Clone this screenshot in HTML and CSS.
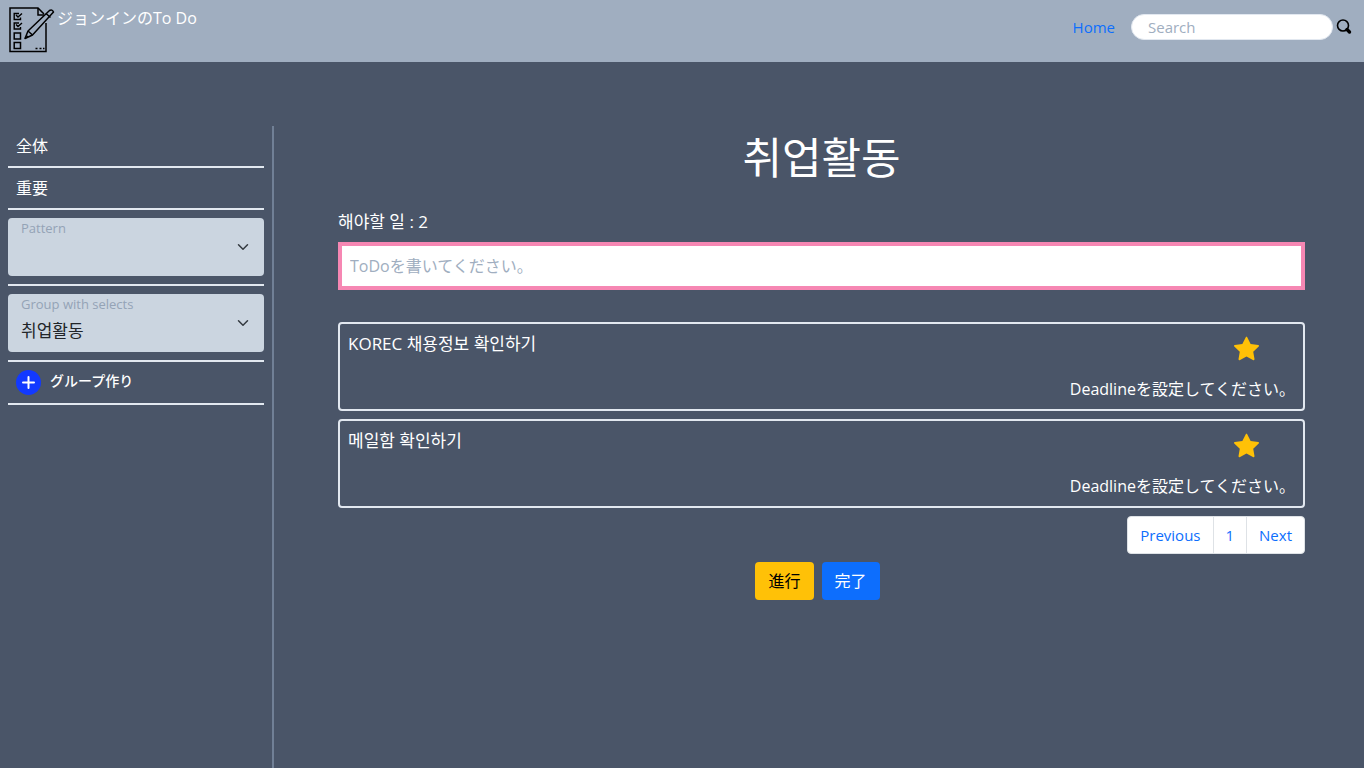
FILE: index.html
```html
<!DOCTYPE html>
<html lang="ja">
<head>
<meta charset="utf-8">
<meta name="viewport" content="width=device-width, initial-scale=1">
<title>ジョンインのTo Do</title>
<link rel="stylesheet" href="styles.css">
</head>
<body>
<header class="topbar">
  <div class="brand">
    <svg class="brand-logo" viewBox="0 0 48 48" fill="none" stroke="#000" stroke-width="1.5" aria-hidden="true">
      <path d="M38 17V45.500H2V2H30L36 8"/>
      <path d="M30 2V9H36"/>
      <path d="M17 32.500L20 25L41.500 4.500Q44 3 45.500 6L24.500 29Z" stroke-linejoin="round"/>
      <path d="M20 25L24.500 29M38 7.500L42.500 11.500M17 32.500L20 30" />
      <path d="M11 7.500H6.200V13.500H12.500V11.500M8 9L10 11L14 7.500" stroke-width="1.400"/>
      <path d="M11 17H6.200V23H12.500V21M8 18.500L10 20.500L14 17" stroke-width="1.400"/>
      <path d="M6.200 27H12.500V33H6.200ZM6.200 36.500H12.500V42.500H6.200Z"/>
      <path d="M27.500 42.500H29.500M31.500 42.500H33.500M35 42.500H36.500"/>
    </svg>
    <span class="brand-name">ジョンインのTo Do</span>
  </div>
  <nav class="topnav">
    <a class="home" href="#">Home</a>
    <form class="search" role="search">
      <input class="search-input" type="search" placeholder="Search" aria-label="Search">
      <button class="search-button" type="button" aria-label="検索">
        <svg width="16" height="16" viewBox="0 0 16 16" fill="none" stroke="#000" aria-hidden="true">
          <circle cx="7" cy="6.5" r="5.5" stroke-width="1.6"/>
          <path d="M11 10.5L13.5 13" stroke-width="3.4" stroke-linecap="round"/>
        </svg>
      </button>
    </form>
  </nav>
</header>
<div class="layout">
  <aside class="sidebar">
    <ul class="menu">
      <li class="menu-item"><a class="menu-link" href="#">全体</a></li>
      <li class="menu-item"><a class="menu-link" href="#">重要</a></li>
      <li class="menu-item menu-field">
        <div class="field">
          <select class="field-select" id="pattern"><option></option></select>
          <label class="field-label" for="pattern">Pattern</label>
          <svg class="field-arrow" viewBox="0 0 16 16" aria-hidden="true"><path d="M2 5l6 6 6-6"/></svg>
        </div>
      </li>
      <li class="menu-item menu-field">
        <div class="field">
          <select class="field-select korean" id="group"><option>취업활동</option></select>
          <label class="field-label" for="group">Group with selects</label>
          <svg class="field-arrow" viewBox="0 0 16 16" aria-hidden="true"><path d="M2 5l6 6 6-6"/></svg>
        </div>
      </li>
      <li class="menu-item">
        <button class="add-group" type="button">
          <svg class="add-icon" viewBox="0 0 25 25" aria-hidden="true">
            <circle cx="12.5" cy="12.5" r="12.5" fill="#1239ff"/>
            <path d="M12.5 7v11M7 12.5h11" stroke="#fff" stroke-width="2" stroke-linecap="round"/>
          </svg>
          <span>グループ作り</span>
        </button>
      </li>
    </ul>
  </aside>
  <main class="content">
    <h1 class="title">취업활동</h1>
    <label class="count korean" for="todo">해야할 일 : 2</label>
    <input class="todo-input" id="todo" type="text" placeholder="ToDoを書いてください。">
    <ul class="todo-list">
      <li class="todo">
        <span class="todo-name korean">KOREC 채용정보 확인하기</span>
        <button class="star" type="button" aria-label="重要">
          <svg class="star-icon" viewBox="0 0 16 16" aria-hidden="true"><path d="M3.612 15.443c-.386.198-.824-.149-.746-.592l.83-4.730L.173 6.765c-.329-.314-.158-.888.283-.950l4.898-.696L7.538.792c.197-.390.730-.390.927 0l2.184 4.327 4.898.696c.441.062.612.636.282.950l-3.522 3.356.830 4.730c.078.443-.360.790-.746.592L8 13.187z"/></svg>
        </button>
        <span class="deadline">Deadlineを設定してください。</span>
      </li>
      <li class="todo">
        <span class="todo-name korean">메일함 확인하기</span>
        <button class="star" type="button" aria-label="重要">
          <svg class="star-icon" viewBox="0 0 16 16" aria-hidden="true"><path d="M3.612 15.443c-.386.198-.824-.149-.746-.592l.83-4.730L.173 6.765c-.329-.314-.158-.888.283-.950l4.898-.696L7.538.792c.197-.390.730-.390.927 0l2.184 4.327 4.898.696c.441.062.612.636.282.950l-3.522 3.356.830 4.730c.078.443-.360.790-.746.592L8 13.187z"/></svg>
        </button>
        <span class="deadline">Deadlineを設定してください。</span>
      </li>
    </ul>
    <nav class="pager" aria-label="ページ">
      <a class="page" href="#">Previous</a>
      <a class="page" href="#">1</a>
      <a class="page" href="#">Next</a>
    </nav>
    <div class="actions">
      <button class="action action-progress" type="button">進行</button>
      <button class="action action-done" type="button">完了</button>
    </div>
  </main>
</div>
</body>
</html>
```

FILE: styles.css
```css
*, *::before, *::after {
  box-sizing: border-box;
}

body {
  display: flex;
  flex-direction: column;
  min-height: 100vh;
  margin: 0;
  background: #4a5568;
  color: #fff;
  font: 16px/24px "Open Sans", "Noto Sans CJK JP", "Noto Sans CJK KR", sans-serif;
}

a {
  color: #0d6efd;
  text-decoration: none;
}

button, input, select {
  margin: 0;
  border: 0;
  font: inherit;
}

button {
  padding: 0;
  background: none;
  color: inherit;
  cursor: pointer;
}

ul {
  margin: 0;
  padding: 0;
  list-style: none;
}

input::placeholder {
  color: #a0aec0;
  opacity: 1;
}

.korean {
  font-family: "Open Sans", "Noto Sans CJK KR", sans-serif;
  font-size: 17px;
}

.topbar {
  display: flex;
  justify-content: space-between;
  height: 62px;
  padding: 6px 12px 8px 8px;
  background: #a0aec0;
}

.brand {
  display: flex;
  gap: 1px;
}

.brand-logo {
  width: 48px;
  height: 48px;
}

.topnav {
  display: flex;
  align-items: center;
  gap: 16px;
  height: 42px;
}

.home {
  font-size: 15px;
}

.search {
  display: flex;
  align-items: center;
  gap: 3px;
}

.search-input {
  width: 202px;
  height: 26px;
  padding: 0 16px;
  border: 1px solid #e2e8f0;
  border-radius: 13px;
  background: #fff;
  font-size: 15px;
}

.search-button {
  display: flex;
}

.layout {
  display: flex;
  flex: 1;
  padding-top: 64px;
}

.sidebar {
  flex: none;
  width: 274px;
  padding: 0 8px;
  border-right: 2px solid #718096;
}

.menu-item {
  padding: 8px;
  border-bottom: 2px solid #e2e8f0;
}

.menu-field {
  padding: 8px 0;
}

.menu-link {
  display: block;
  color: #fff;
}

.field {
  position: relative;
}

.field-select {
  display: block;
  width: 100%;
  height: 58px;
  padding: 20px 36px 4px 13px;
  border-radius: 4px;
  background: #cbd5e0;
  color: #212529;
  appearance: none;
}

.field-label {
  position: absolute;
  top: 0;
  left: 13px;
  color: #94a3b6;
  font-size: 13px;
  line-height: 20px;
}

.field-arrow {
  position: absolute;
  top: 23px;
  right: 15px;
  width: 12px;
  height: 12px;
  fill: none;
  stroke: #343a40;
  stroke-width: 2;
  stroke-linecap: round;
  stroke-linejoin: round;
  pointer-events: none;
}

.add-group {
  display: flex;
  gap: 9px;
  font-size: 14px;
  font-weight: 500;
  line-height: 22px;
}

.add-icon {
  width: 25px;
  height: 25px;
}

.content {
  display: flex;
  flex: 1;
  flex-direction: column;
  padding: 0 59px 0 64px;
}

.title {
  margin: 0 0 26px;
  font: 400 43px/58px "Noto Sans CJK KR", sans-serif;
  text-align: center;
}

.count {
  margin-bottom: 8px;
}

.todo-input {
  width: 100%;
  height: 48px;
  padding: 0 8px;
  border: 4px solid #f687b3;
  background: #fff;
}

.todo-list {
  display: grid;
  gap: 8px;
  margin-top: 32px;
}

.todo {
  display: grid;
  grid-template-columns: 1fr 61px;
  row-gap: 16px;
  padding: 8px;
  border: 2px solid #e2e8f0;
  border-radius: 4px;
}

.star {
  display: flex;
  height: 29px;
  padding-top: 4px;
}

.star-icon {
  width: 25px;
  height: 25px;
  fill: #ffc107;
}

.deadline {
  grid-column: 1 / -1;
  text-align: right;
}

.pager {
  display: flex;
  align-self: flex-end;
  margin-top: 8px;
  overflow: hidden;
  border: 1px solid #dee2e6;
  border-radius: 4px;
  background: #fff;
  font-size: 15px;
}

.page {
  padding: 6px 12px;
}

.page + .page {
  border-left: 1px solid #dee2e6;
}

.actions {
  display: flex;
  justify-content: center;
  gap: 8px;
  margin: 8px 8px 0 0;
}

.action {
  padding: 7px 13px;
  border-radius: 4px;
}

.action-progress {
  background: #ffc107;
  color: #000;
}

.action-done {
  background: #0d6efd;
  color: #fff;
}
```
